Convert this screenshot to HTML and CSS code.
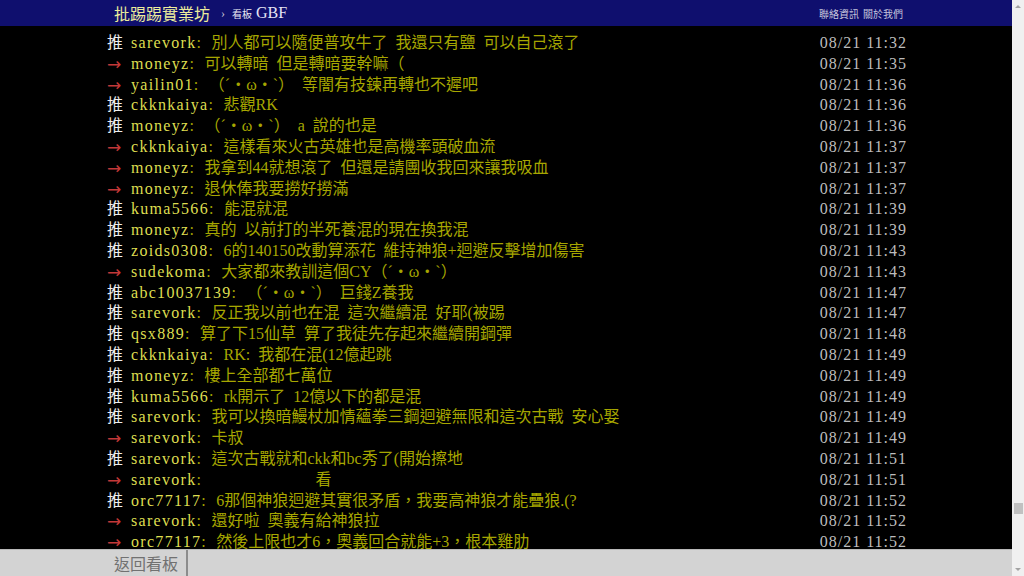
FILE: index.html
```html
<!DOCTYPE html>
<html lang="zh-Hant">
<head>
    <meta charset="UTF-8">
    <title>批踢踢實業坊 - 看板 GBF</title>
    <link rel="stylesheet" href="styles.css">
</head>
<body>
    <div class="page">
        <div class="main">
            <div class="topbar">
                <div class="bar-inner">
                    <a class="site-name">批踢踢實業坊</a>
                    <span class="crumb">›</span>
                    <span class="board-label">看板</span>
                    <a class="board-name">GBF</a>
                    <div class="links">
                        <a>聯絡資訊</a>
                        <a>關於我們</a>
                    </div>
                </div>
            </div>

            <div class="content">
                <div class="push-list">
                    <div class="push"><span class="tag up">推</span><span class="user">sarevork</span><span class="sep">:</span><span class="text">別人都可以隨便普攻牛了 我還只有鹽 可以自己滾了</span><span class="time">08/21 11:32</span></div>
                    <div class="push"><span class="tag arrow">→</span><span class="user">moneyz</span><span class="sep">:</span><span class="text">可以轉暗 但是轉暗要幹嘛（</span><span class="time">08/21 11:35</span></div>
                    <div class="push"><span class="tag arrow">→</span><span class="user">yailin01</span><span class="sep">:</span><span class="text">（´・ω・`） 等闇有技鍊再轉也不遲吧</span><span class="time">08/21 11:36</span></div>
                    <div class="push"><span class="tag up">推</span><span class="user">ckknkaiya</span><span class="sep">:</span><span class="text">悲觀RK</span><span class="time">08/21 11:36</span></div>
                    <div class="push"><span class="tag up">推</span><span class="user">moneyz</span><span class="sep">:</span><span class="text">（´・ω・`） a 說的也是</span><span class="time">08/21 11:36</span></div>
                    <div class="push"><span class="tag arrow">→</span><span class="user">ckknkaiya</span><span class="sep">:</span><span class="text">這樣看來火古英雄也是高機率頭破血流</span><span class="time">08/21 11:37</span></div>
                    <div class="push"><span class="tag arrow">→</span><span class="user">moneyz</span><span class="sep">:</span><span class="text">我拿到44就想滾了 但還是請團收我回來讓我吸血</span><span class="time">08/21 11:37</span></div>
                    <div class="push"><span class="tag arrow">→</span><span class="user">moneyz</span><span class="sep">:</span><span class="text">退休俸我要撈好撈滿</span><span class="time">08/21 11:37</span></div>
                    <div class="push"><span class="tag up">推</span><span class="user">kuma5566</span><span class="sep">:</span><span class="text">能混就混</span><span class="time">08/21 11:39</span></div>
                    <div class="push"><span class="tag up">推</span><span class="user">moneyz</span><span class="sep">:</span><span class="text">真的 以前打的半死養混的現在換我混</span><span class="time">08/21 11:39</span></div>
                    <div class="push"><span class="tag up">推</span><span class="user">zoids0308</span><span class="sep">:</span><span class="text">6的140150改動算添花 維持神狼+迴避反擊增加傷害</span><span class="time">08/21 11:43</span></div>
                    <div class="push"><span class="tag arrow">→</span><span class="user">sudekoma</span><span class="sep">:</span><span class="text">大家都來教訓這個CY（´・ω・`）</span><span class="time">08/21 11:43</span></div>
                    <div class="push"><span class="tag up">推</span><span class="user">abc10037139</span><span class="sep">:</span><span class="text">（´・ω・`） 巨錢Z養我</span><span class="time">08/21 11:47</span></div>
                    <div class="push"><span class="tag up">推</span><span class="user">sarevork</span><span class="sep">:</span><span class="text">反正我以前也在混 這次繼續混 好耶(被踢</span><span class="time">08/21 11:47</span></div>
                    <div class="push"><span class="tag up">推</span><span class="user">qsx889</span><span class="sep">:</span><span class="text">算了下15仙草 算了我徒先存起來繼續開鋼彈</span><span class="time">08/21 11:48</span></div>
                    <div class="push"><span class="tag up">推</span><span class="user">ckknkaiya</span><span class="sep">:</span><span class="text">RK: 我都在混(12億起跳</span><span class="time">08/21 11:49</span></div>
                    <div class="push"><span class="tag up">推</span><span class="user">moneyz</span><span class="sep">:</span><span class="text">樓上全部都七萬位</span><span class="time">08/21 11:49</span></div>
                    <div class="push"><span class="tag up">推</span><span class="user">kuma5566</span><span class="sep">:</span><span class="text">rk開示了 12億以下的都是混</span><span class="time">08/21 11:49</span></div>
                    <div class="push"><span class="tag up">推</span><span class="user">sarevork</span><span class="sep">:</span><span class="text">我可以換暗鰻杖加情蘊拳三鋼迴避無限和這次古戰 安心娶</span><span class="time">08/21 11:49</span></div>
                    <div class="push"><span class="tag arrow">→</span><span class="user">sarevork</span><span class="sep">:</span><span class="text">卡叔</span><span class="time">08/21 11:49</span></div>
                    <div class="push"><span class="tag up">推</span><span class="user">sarevork</span><span class="sep">:</span><span class="text">這次古戰就和ckk和bc秀了(開始擦地</span><span class="time">08/21 11:51</span></div>
                    <div class="push"><span class="tag arrow">→</span><span class="user">sarevork</span><span class="sep">:</span><span class="text">　　　　　　 看</span><span class="time">08/21 11:51</span></div>
                    <div class="push"><span class="tag up">推</span><span class="user">orc77117</span><span class="sep">:</span><span class="text">6那個神狼迴避其實很矛盾，我要高神狼才能疊狼.(?</span><span class="time">08/21 11:52</span></div>
                    <div class="push"><span class="tag arrow">→</span><span class="user">sarevork</span><span class="sep">:</span><span class="text">還好啦 奧義有給神狼拉</span><span class="time">08/21 11:52</span></div>
                    <div class="push"><span class="tag arrow">→</span><span class="user">orc77117</span><span class="sep">:</span><span class="text">然後上限也才6，奧義回合就能+3，根本雞肋</span><span class="time">08/21 11:52</span></div>
                </div>
            </div>

            <div class="bottombar">
                <div class="bar-inner">
                    <a class="back-button">返回看板</a>
                </div>
            </div>
        </div>

        <div class="scrollbar">
            <span class="arrow-up"></span>
            <div class="track"><span class="thumb"></span></div>
            <span class="arrow-down"></span>
        </div>
    </div>
</body>
</html>
```

FILE: styles.css
```css
body {
    margin: 0;
    background-color: #000000;
    font-family: "Liberation Serif", "Noto Sans CJK TC", serif;
    overflow: hidden;
}
.page {
    display: flex;
    height: 576px;
}
.main {
    flex: 1;
    min-width: 0;
    display: flex;
    flex-direction: column;
}
.bar-inner {
    width: 802px;
    height: 100%;
    margin: 0 auto;
    display: flex;
    align-items: center;
    box-sizing: border-box;
}

/* top bar */
.topbar {
    height: 26px;
    flex: none;
    background-color: #0f0f6e;
}
.topbar .bar-inner {
    padding: 0 4px 0 9px;
}
.site-name {
    font-family: "Noto Sans CJK TC", sans-serif;
    font-size: 16px;
    color: #ecec9c;
    line-height: 26px;
}
.crumb {
    font-size: 12px;
    color: #c8c8d8;
    margin: 0 7px 0 11px;
}
.board-label {
    font-family: "Noto Sans CJK TC", sans-serif;
    font-size: 10px;
    color: #e8e8f0;
    margin-right: 4px;
}
.board-name {
    font-size: 16px;
    color: #e4e4f4;
}
.links {
    margin-left: auto;
    display: flex;
    gap: 4px;
}
.links a {
    font-family: "Noto Sans CJK TC", sans-serif;
    font-size: 10px;
    color: #c4c4dc;
}

/* pushes */
.content {
    flex: 1;
    overflow: hidden;
    padding-top: 7px;
}
.push-list {
    width: 802px;
    margin: 0 auto;
}
.push {
    display: flex;
    height: 20.8px;
    line-height: 20.8px;
    font-size: 16px;
    white-space: pre;
}
.tag {
    width: 26px;
    flex: none;
    padding-left: 2px;
    box-sizing: border-box;
}
.tag.up {
    color: #eeeeee;
}
.tag.arrow {
    font-family: "DejaVu Sans", sans-serif;
    font-size: 17px;
    color: #c23838;
}
.user {
    color: #dede50;
    letter-spacing: 1.3px;
}
.sep {
    color: #a6a600;
    width: 15px;
    flex: none;
}
.text {
    color: #a6a600;
    word-spacing: 4px;
}
.time {
    margin-left: auto;
    color: #bdbdbd;
    letter-spacing: 1px;
}

/* bottom bar */
.bottombar {
    height: 27px;
    flex: none;
    background-color: #d3d3d3;
    border-top: 1px solid #b9b9b9;
    box-sizing: border-box;
}
.back-button {
    font-family: "Noto Sans CJK TC", sans-serif;
    font-size: 16px;
    color: #717171;
    height: 100%;
    line-height: 26px;
    padding: 0 8px 0 9px;
    border-right: 2px solid #8c8c8c;
}

/* scrollbar */
.scrollbar {
    width: 12px;
    flex: none;
    background-color: #f0f0f0;
    display: flex;
    flex-direction: column;
    align-items: center;
}
.arrow-up,
.arrow-down {
    width: 0;
    height: 0;
    border-left: 3px solid transparent;
    border-right: 3px solid transparent;
    margin: 5px 0;
}
.arrow-up {
    border-bottom: 3px solid #a3a3a3;
}
.arrow-down {
    border-top: 3px solid #a3a3a3;
}
.track {
    flex: 1;
    width: 100%;
    display: flex;
    justify-content: center;
}
.thumb {
    width: 9px;
    height: 11px;
    margin-top: 490px;
    background-color: #c1c1c1;
}
```
